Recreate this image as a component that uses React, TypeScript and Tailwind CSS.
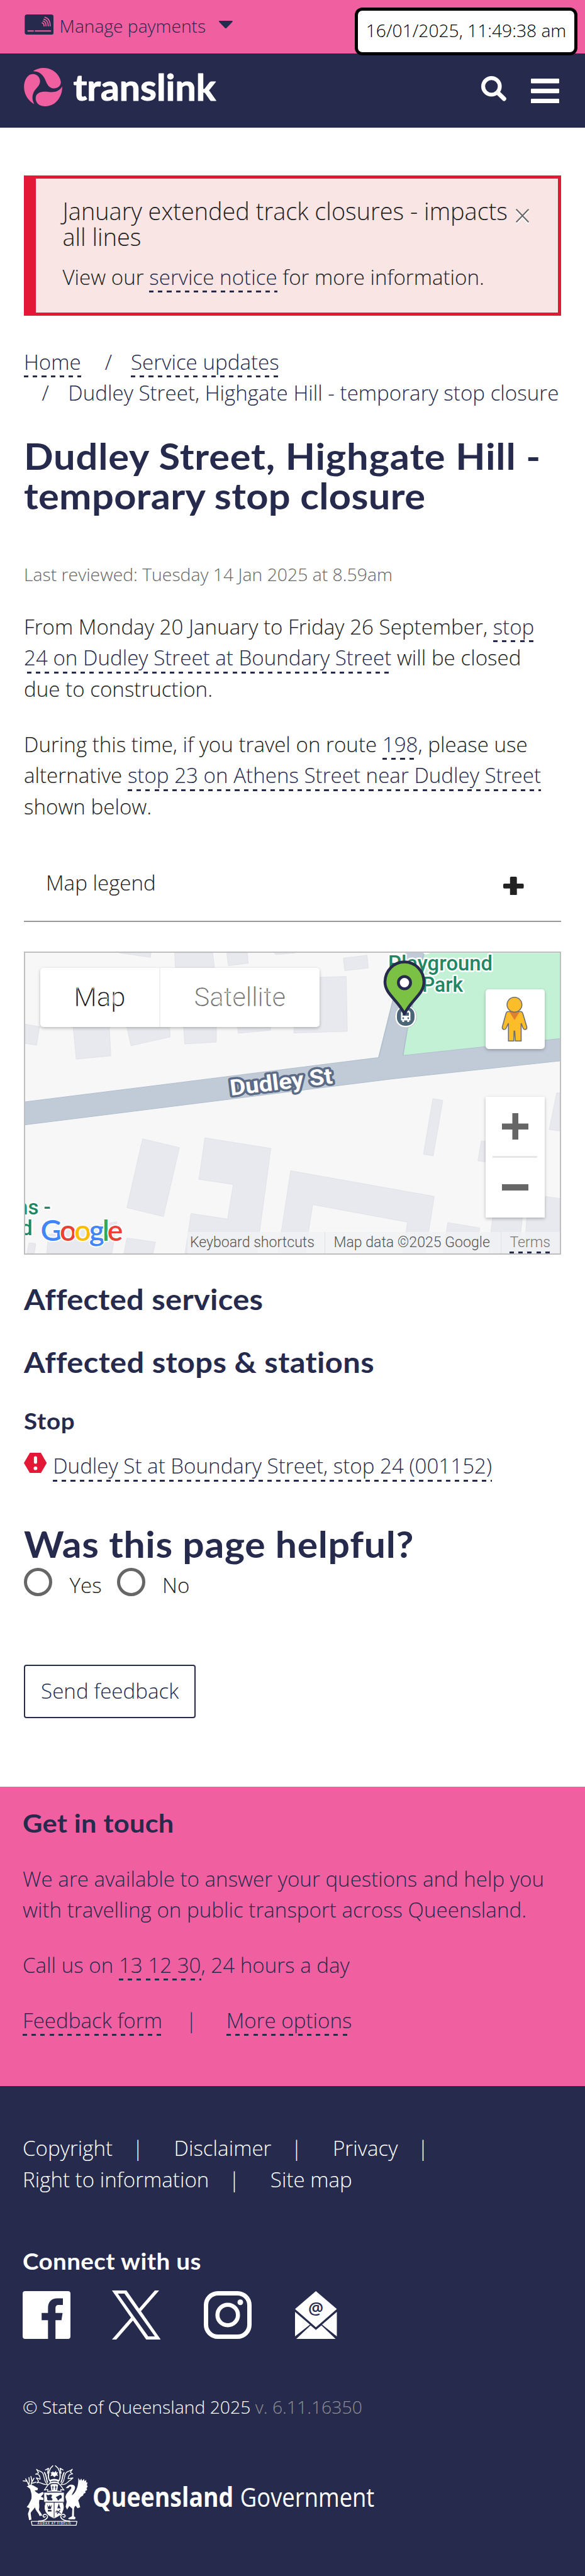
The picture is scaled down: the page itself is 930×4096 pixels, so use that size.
import React from "react";

const LINK =
  "cursor-pointer pb-[2.5px] text-[#262b4d] bg-[repeating-linear-gradient(90deg,#262b4d_0_7.1px,transparent_7.1px_14.2px)] bg-[length:100%_3px] bg-[position:0_100%] bg-no-repeat";

const FOOTER_LINKS = ["Copyright", "Disclaimer", "Privacy", "Right to information", "Site map"];

const BUILDINGS = [
  "468,72 570,72 575,145 470,145",
  "320,72 405,72 403,93",
  "608,72 663,72 665,122 612,134",
  "735,72 790,72 740,80",
  "920,97 984,83 987,145 924,158",
  "858,190 928,186 931,453 787,461 789,430 858,430",
  "196,430 293,430 297,572 204,588",
  "340,434 455,434 456,480 351,523",
  "492,430 580,430 580,505 495,514",
  "637,430 725,430 725,448 638,462",
  "68,418 106,430 98,520 68,512",
  "382,975 481,1018 438,1353 340,1310",
  "549,970 726,1022 688,1532 496,1532 512,1338 610,1365 625,1197 533,1172",
  "779,1130 1164,1255 1140,1532 1080,1532 1092,1380 838,1295 818,1532 745,1532",
  "1160,780 1187,788 1161,1058 1135,1050",
  "1492,752 1500,752 1500,937 1472,930",
  "1290,985 1310,990 1310,1090 1281,1082",
  "1200,1382 1286,1408 1275,1532 1188,1532",
  "1320,1358 1400,1358 1390,1532 1310,1532",
  "1462,1255 1500,1265 1500,1532 1405,1532 1412,1358 1455,1358",
  "340,1457 417,1477 410,1532 332,1532",
  "130,1440 313,1378 300,1532 125,1532",
  "78,1480 96,1484 92,1532 72,1532",
];

function Bold({ children, className }: { children: React.ReactNode; className: string }) {
  return <span className={`block w-max origin-left whitespace-nowrap font-['Lato',sans-serif] font-bold ${className}`}>{children}</span>;
}

function TopBar() {
  return (
    <div className="relative flex h-[85.2px] items-start bg-[#f060a1] pl-[38.9px]">
      <svg className="mt-[22.9px] h-[32.4px] w-[46.4px]" viewBox="58 57 176 123">
        <rect x="59" y="57" width="175" height="122" rx="15" fill="#262b4d" />
        <g stroke="#f060a1" strokeWidth="6.5" fill="none" strokeLinecap="round">
          <path d="M79 156.5H111M123 156.5H215" strokeWidth="8" />
          <path d="M164 108C172 110 176 117 176 126M170 97C182 100 188 112 188 126M175 86C192 89 201 106 201 126M181 74C203 79 214 101 213 126" />
        </g>
      </svg>
      <span className="ml-[9.3px] mt-[19.5px] text-[28.2px] leading-[42.6px]">Manage payments</span>
      <svg className="ml-[21px] mt-[32.9px] h-[12.4px] w-[21.8px]" viewBox="0 0 22 12.4">
        <path d="M1.2 0H20.8C22 0 22.3 1 21.5 1.9L12 11.8Q11 12.8 10 11.8L.5 1.9C-.3 1 0 0 1.2 0Z" fill="#262b4d" />
      </svg>
      <div className="absolute left-[564px] top-[11.8px] z-10 flex h-[75.8px] w-[354px] justify-center rounded-[12px] border-[5px] border-black bg-white pt-[10.2px] text-[28.2px] leading-[42.6px] text-black">
        16/01/2025, 11:49:38 am
      </div>
    </div>
  );
}

function Header() {
  return (
    <header className="flex h-[118.2px] items-start bg-[#262b4d] pl-[38px]">
      <svg className="mt-[22.6px] h-[62px] w-[308px]" viewBox="54 380 1171 236">
        <g fill="#f060a1">
          <path d="M108 400C140 378 185 372 225 393C258 412 277 445 277 468C277 490 255 506 232 504C210 502 198 488 188 465C176 432 155 398 108 400Z" />
          <path d="M116 599C80 580 54 540 54 495C54 450 78 416 108 417C135 418 152 438 151 463C149 488 130 500 115 522C103 545 100 570 116 599Z" />
          <path d="M285 492C287 530 270 572 235 597C205 615 170 617 148 605C125 590 120 565 128 547C138 528 160 523 190 524C235 530 265 525 285 492Z" />
        </g>
        <text x="352" y="578" textLength="863" lengthAdjust="spacingAndGlyphs" fontFamily="Lato, sans-serif" fontWeight="700" fontSize="216" fill="#fff" stroke="#fff" strokeWidth="4" strokeLinejoin="round">
          translink
        </text>
      </svg>
      <svg className="ml-[419px] mt-[36.3px] h-[39.6px] w-[40px]" viewBox="0 0 40 39.6" fill="none" stroke="#fff" strokeLinecap="round">
        <circle cx="16.3" cy="16.3" r="13.2" strokeWidth="6.2" />
        <path d="M26.5 26.5L36.3 36" strokeWidth="7" />
      </svg>
      <svg className="ml-[39px] mt-[39.7px] h-[39.5px] w-[45px]" viewBox="0 0 45 39.5" fill="#fff">
        <rect width="45" height="7.4" rx="1.2" />
        <rect y="15.9" width="45" height="7.4" rx="1.2" />
        <rect y="32" width="45" height="7.4" rx="1.2" />
      </svg>
    </header>
  );
}

function Pegman() {
  return (
    <svg className="h-[94.4px] w-[94.4px]" viewBox="0 0 94.4 94.4">
      <path
        d="M35 35.5H56.5Q58.5 36 59.3 39L65.5 60Q66 63.5 63 64Q60.5 64 59.5 61.5L56.5 54V82.3H47.3L46.3 66.5H45.3L44.8 82.3H36.3V54L32.5 62Q31.5 64.2 29 64Q26 63.2 26.5 60L32.5 38.5Q33.2 36 35 35.5Z"
        fill="#fbbd2a"
        stroke="#6f6f6f"
        strokeWidth="1.6"
      />
      <path d="M38 36H54L46 49Z" fill="#e27f2d" />
      <circle cx="45.9" cy="24.6" r="11.8" fill="#fbbd2a" stroke="#6f6f6f" strokeWidth="1.6" />
    </svg>
  );
}

function MapPanel() {
  return (
    <div className="relative mt-[46.3px] h-[482.4px] w-[854px] overflow-hidden bg-[#f7f7f7] font-['Roboto',sans-serif]">
      <svg className="block h-[482.4px] w-[854px]" viewBox="0 0 854 482.4">
        <g transform="scale(0.5931 0.3272) translate(-64 -65)">
          <g fill="#e8e9ee" stroke="#dcdee4" strokeWidth="1.5">
            {BUILDINGS.map((p) => (
              <polygon key={p} points={p} />
            ))}
          </g>
          <path d="M1138 72H1504V490L1080 572L1092 440Z" fill="#c3f1d6" />
          <path d="M60 797L1015 580L1052 310L1088 60H1138L1092 440L1080 570L1510 486V595L1055 683L60 909Z" fill="#c1cbd8" stroke="#b1bfcc" strokeWidth="3" />
        </g>
        <g fontFamily="Roboto, sans-serif" fontWeight="500" fill="#1f8763" stroke="#fff" strokeWidth="5" strokeLinejoin="round" paintOrder="stroke">
          <text x="636" y="-4" fontSize="32">y</text>
          <text x="579" y="30" fontSize="33" textLength="166" lengthAdjust="spacingAndGlyphs">Playground</text>
          <text x="633" y="64.5" fontSize="33" textLength="65" lengthAdjust="spacingAndGlyphs">Park</text>
          <text x="-12" y="418.5" fontSize="33">ns -</text>
          <text x="-5" y="451" fontSize="33">d</text>
        </g>
        <text transform="rotate(-6.9 330 230)" x="329" y="229" textLength="164" lengthAdjust="spacingAndGlyphs" fontFamily="Roboto, sans-serif" fontWeight="700" fontSize="35" fill="#fff" stroke="#5c6c87" strokeWidth="7" strokeLinejoin="round" paintOrder="stroke">
          Dudley St
        </text>
        <rect x="590" y="86" width="34" height="35" rx="16" fill="#fff" stroke="#b8c0c8" strokeWidth="1" />
        <rect x="593" y="88" width="28" height="30" rx="13" fill="#4a6478" />
        <path d="M599.5 98Q599.5 93 607 93T614.5 98V109.5H612.5V112H609.5V109.5H604.5V112H601.5V109.5H599.5Z" fill="#fff" />
        <path d="M602 97H612V102H602Z" fill="#4a6478" />
        <circle cx="603" cy="106" r="1.4" fill="#4a6478" />
        <circle cx="611" cy="106" r="1.4" fill="#4a6478" />
        <path d="M605 16.5C588 16.5 574.5 30.5 574 48C574 68 594 76 605 99C616 76 636 68 636 48C635.5 30.5 622 16.5 605 16.5Z" fill="#7bc143" stroke="#262b4d" strokeWidth="4.5" strokeLinejoin="round" />
        <circle cx="605" cy="49.5" r="9.7" fill="#fff" stroke="#262b4d" strokeWidth="4.5" />
        <text x="26.5" y="460" textLength="131" fontFamily="Lato, sans-serif" fontWeight="600" fontSize="46.5" stroke="#fff" strokeWidth="4" paintOrder="stroke" strokeLinejoin="round">
          <tspan fill="#4285f4">G</tspan>
          <tspan fill="#ea4335">o</tspan>
          <tspan fill="#fbbc05">o</tspan>
          <tspan fill="#4285f4">g</tspan>
          <tspan fill="#34a853">l</tspan>
          <tspan fill="#ea4335">e</tspan>
        </text>
      </svg>
      <div className="absolute left-[26px] top-[26px] flex h-[94.5px] rounded-[5px] bg-white text-[41.8px] font-light leading-[93px] shadow-[0_2px_5px_rgba(0,0,0,0.25)] [-webkit-text-stroke:0.5px_white]">
        <span className="w-[191px] border-r-2 border-[#f1f1f1] text-center text-black">Map</span>
        <span className="w-[252.6px] text-center text-[#666]">Satellite</span>
      </div>
      <div className="absolute left-[733.6px] top-[60.9px] rounded-[5px] bg-white shadow-[0_2px_5px_rgba(0,0,0,0.25)]">
        <Pegman />
      </div>
      <div className="absolute left-[733.6px] top-[231.4px] flex h-[191.7px] w-[94.4px] flex-col items-center bg-white shadow-[0_2px_5px_rgba(0,0,0,0.25)]">
        <svg className="mt-[26px] h-[42.5px] w-[42.5px]" viewBox="0 0 42.5 42.5" fill="#666">
          <path d="M0 16.5H16.5V0H26V16.5H42.5V26H26V42.5H16.5V26H0Z" />
        </svg>
        <div className="mt-[26px] h-[2.5px] w-[70.6px] bg-[#e6e6e6]" />
        <div className="mt-[42.5px] h-[9.5px] w-[42.5px] bg-[#666]" />
      </div>
      <div className="absolute bottom-[2px] right-[2px] flex h-[33.5px] items-start bg-[#f0f1f4]/80 text-[23.1px] font-light leading-[33.5px] text-[#555]">
        <span className="w-[219px] whitespace-nowrap border-r border-[#e0e2e6] pl-[4px]">Keyboard shortcuts</span>
        <span className="w-[280px] whitespace-nowrap border-r border-[#e0e2e6] pl-[13.5px]">Map data ©2025 Google</span>
        <span className="ml-[13.5px] mr-[15px] h-[33.5px] bg-[repeating-linear-gradient(90deg,#262b4d_0_7.1px,transparent_7.1px_14.2px)] bg-[length:100%_3px] bg-[position:0_100%] bg-no-repeat text-[#777]">Terms</span>
      </div>
      <div className="pointer-events-none absolute inset-0 border-2 border-[#bfbfbf]" />
    </div>
  );
}

function CrestLogo() {
  return (
    <svg className="mt-[71.9px] block h-[96.5px] w-[560.5px]" viewBox="54 80 2131 367" fill="#fff">
      <g fill="none" stroke="#fff" strokeWidth="5" strokeLinecap="round" strokeLinejoin="round">
        <path d="M236 83L222 98L212 122M252 83L268 98L278 122M192 108L210 98L204 128M298 108L280 98L286 128" strokeWidth="6" />
        <path d="M212 122C206 150 208 165 222 178M278 122C284 150 282 165 268 178" strokeWidth="7" />
        <path d="M205 195C180 180 188 150 176 128C165 112 150 118 138 104L150 126L132 134C152 132 158 142 160 164L136 156L150 176L140 186C160 176 172 200 200 196" />
        <path d="M285 195C310 180 302 150 314 128C325 112 340 118 354 104L342 122L356 132C336 132 330 142 328 160L358 156L342 170C326 178 318 200 290 196" />
        <path d="M186 124C200 145 196 165 204 182M304 124C292 145 296 165 286 182" strokeWidth="7" />
        <path d="M218 190C200 200 196 220 184 230L206 226L204 238L226 236M270 190C288 200 292 220 304 230L284 226L286 238L264 236" />
        <path d="M92 200L80 176L57 174M80 176L72 162M92 196L94 176L92 154M104 200L110 176L104 148M110 180L122 158M112 188L134 182" strokeWidth="6" />
        <path d="M106 419H382L377 443H111Z" />
        <path d="M150 417C170 418 200 410 204 392C206 376 186 372 178 382C174 392 186 398 190 390M338 417C318 418 288 410 284 392C282 376 302 372 310 382C314 392 302 398 298 390" strokeWidth="6" />
      </g>
      <path d="M234 116L245 124L256 112L257 124L268 122L262 132L268 144L256 142L245 152L236 142L222 146L228 132L222 120L233 124Z" />
      <path d="M218 168Q245 156 272 168L270 178Q245 168 220 178ZM216 184Q245 172 274 184V192Q245 182 216 192Z" />
      <path d="M222 197Q245 190 268 197L262 239H228Z" />
      <path d="M236 204V228M230 212H242M254 204V228M248 212H260" stroke="#262b4d" strokeWidth="4" fill="none" />
      <path d="M78 206C90 206 94 196 106 198C122 202 130 210 146 218L144 230L126 232C132 240 138 244 150 252L174 242L184 246C178 256 170 262 164 270L178 276L182 290L156 288C150 300 156 320 154 336L152 350C158 362 168 370 172 384L156 386C152 372 138 358 132 346L128 334C122 346 108 356 102 368L107 408L93 412L86 376C86 366 96 352 94 340L78 332C92 318 98 300 106 284C112 262 104 240 98 222Z" />
      <path d="M390 156L400 172L408 160L414 174L424 162L428 176L438 168L438 184L446 184L442 200L447 208L440 218L444 228L432 236L434 246L422 252L420 262L404 272L390 292L402 334L386 340L374 324C366 330 364 340 364 350V388L374 396L370 406L334 406L328 400L352 388L354 342L336 326L322 348L314 330L320 300L312 272C316 248 336 236 348 218C350 206 338 204 330 218L314 218C324 206 334 196 350 197C370 198 376 214 366 230C358 246 352 252 352 262C380 240 392 200 390 156Z" />
      <path d="M182 243H305V300L300 310C312 340 300 384 244 403C188 384 176 340 190 310L182 300Z" stroke="#262b4d" strokeWidth="4" />
      <path d="M188 303H300M244 303V398" stroke="#262b4d" strokeWidth="4" />
      <path d="M196 256Q206 262 212 260Q222 254 232 260L226 276Q238 284 232 292H206Q198 288 202 280ZM254 272Q266 268 274 262Q286 254 290 266Q292 280 280 282L268 294L262 282ZM202 318L208 344H224L232 316L222 332L217 318L212 332ZM206 350H228V360H206ZM262 346L272 310L284 346Z" fill="#262b4d" />
      <circle cx="272" cy="362" r="22" fill="#fff" />
      <path d="M258 354L284 372M262 374L280 350M252 362H266" stroke="#262b4d" strokeWidth="5" />
      <text x="244" y="438" textAnchor="middle" fontFamily="Open Sans, sans-serif" fontSize="17" fontWeight="600" textLength="200" lengthAdjust="spacing">AUDAX AT FIDELIS</text>
      <text x="476" y="331" textLength="853" lengthAdjust="spacingAndGlyphs" fontFamily="Open Sans, sans-serif" fontWeight="700" fontSize="160">Queensland</text>
      <text x="1369" y="331" textLength="812" lengthAdjust="spacingAndGlyphs" fontFamily="Open Sans, sans-serif" fontWeight="400" fontSize="160">Government</text>
    </svg>
  );
}

function SocialIcons() {
  return (
    <div className="mt-[22px] flex h-[78px] items-start">
      <svg className="mt-[0.8px] h-[76px] w-[76px]" viewBox="0 0 76 76">
        <rect width="76" height="76" rx="4" fill="#fff" />
        <path d="M40.3 76V46.3H30.2V34.7H40.3V27C40.3 17 46 11.6 55 11.6H64V22.1H57.5C53.5 22.1 52.2 24 52.2 27.5V34.7H63.5L61.7 46.3H52.2V76Z" fill="#262b4d" />
      </svg>
      <svg className="ml-[65.5px] h-[78px] w-[77.5px]" viewBox="0 0 1200 1227" preserveAspectRatio="none" fill="#fff">
        <path d="M714.163 519.284L1160.89 0H1055.03L667.137 450.887L357.328 0H0L468.492 681.821L0 1226.37H105.866L515.491 750.218L842.672 1226.37H1200L714.137 519.284H714.163ZM569.165 687.828L521.697 619.934L144.011 79.694H306.615L611.412 515.685L658.88 583.579L1055.08 1150.3H892.476L569.165 687.854V687.828Z" />
      </svg>
      <svg className="ml-[68.5px] mt-[0.8px] h-[76px] w-[76px]" viewBox="0 0 76 76" fill="none" stroke="#fff">
        <rect x="3.5" y="3.5" width="69" height="69" rx="19" strokeWidth="7" />
        <circle cx="38" cy="38" r="16.3" strokeWidth="6.5" />
        <circle cx="58" cy="17.8" r="4.5" fill="#fff" stroke="none" />
      </svg>
      <svg className="ml-[69.5px] mt-[0.8px] h-[76px] w-[66.5px]" viewBox="0 0 66.5 76" fill="#fff">
        <path d="M33.2 0L66.5 28.5L33.2 57.5L0 28.5ZM0 33L23.7 53.2L0 72ZM66.5 33L43 53.2L66.5 72ZM2 76L24.7 54.5L33.2 61.8L42 54.5L64.5 76Z" />
        <text x="33.2" y="36.5" textAnchor="middle" fontFamily="Open Sans, sans-serif" fontWeight="600" fontSize="27" fill="#262b4d">@</text>
      </svg>
    </div>
  );
}

export default function App() {
  return (
    <div className="h-[4096px] w-[930px] overflow-hidden bg-white font-['Open_Sans',sans-serif] text-[33.13px] font-light leading-[49.7px] text-[#262b4d]">
      <TopBar />
      <Header />
      <main className="h-[2637.7px] px-[38px] pt-[76px] text-[#222]">
        <section className="flex h-[222.3px] items-start border-[5px] border-l-[19px] border-[#e31836] bg-[#f9e5e3] pl-[42.5px] pt-[32px]">
          <div className="w-[716px]">
            <p className="whitespace-nowrap text-[37.86px] leading-[40.3px]">
              January extended track closures - impacts
              <br />
              all lines
            </p>
            <p className="mt-[18.6px]">
              View our <a className={LINK}>service notice</a> for more information.
            </p>
          </div>
          <svg className="ml-[4.5px] mt-[15.7px] h-[25px] w-[21px]" viewBox="0 0 21 25" fill="none" strokeWidth="2">
            <path d="M.7 3.5L20.3 24M20.3 3.5L.7 24" stroke="#fff" />
            <path d="M.7 .7L20.3 21.2M20.3 .7L.7 21.2" stroke="#666" />
          </svg>
        </section>

        <nav className="mt-[49px] text-[#262b4d]">
          <div className="flex">
            <span>
              <a className={LINK}>Home</a>
            </span>
            <span className="ml-[38px] mr-[30px]">/</span>
            <span>
              <a className={LINK}>Service updates</a>
            </span>
          </div>
          <div className="flex pl-[28.5px]">
            <span className="mr-[30.5px]">/</span>
            <span className="whitespace-nowrap">Dudley Street, Highgate Hill - temporary stop closure</span>
          </div>
        </nav>

        <h1 className="mt-[42.7px] text-[58px] leading-[63.7px] text-[#262b4d]">
          <Bold className="scale-x-[1.06] tracking-[0.75px]">Dudley Street, Highgate Hill -</Bold>
          <Bold className="scale-x-[1.06] tracking-[0.3px]">temporary stop closure</Bold>
        </h1>
        <p className="mt-[71.5px] text-[28.35px] leading-[42.6px] text-[#666]">Last reviewed: Tuesday 14 Jan 2025 at 8.59am</p>

        <p className="mt-[37.5px] whitespace-nowrap">
          From Monday 20 January to Friday 26 September,{" "}
          <a className={LINK}>
            stop
            <br />
            24 on Dudley Street at Boundary Street
          </a>{" "}
          will be closed
          <br />
          due to construction.
        </p>
        <p className="mt-[37.7px] whitespace-nowrap">
          During this time, if you travel on route <a className={LINK}>198</a>, please use
          <br />
          alternative <a className={LINK}>stop 23 on Athens Street near Dudley Street</a>
          <br />
          shown below.
        </p>

        <div className="mt-[71.3px] flex h-[87.3px] items-start justify-between border-b-2 border-[#999] pl-[35px] pr-[59.5px]">
          <span>Map legend</span>
          <svg className="mt-[14.8px] h-[29.7px] w-[32.6px]" viewBox="0 0 32.6 29.7" fill="#222">
            <rect x="10.8" width="10.9" height="29.7" rx="1.8" />
            <rect y="11" width="32.6" height="7.8" rx="1.8" />
          </svg>
        </div>

        <MapPanel />

        <h2 className="mt-[40.5px] text-[46.5px] leading-[60px] text-[#262b4d]">
          <Bold className="scale-x-[1.05] tracking-[0.3px]">Affected services</Bold>
        </h2>
        <h2 className="mt-[39.5px] text-[46.5px] leading-[60px] text-[#262b4d]">
          <Bold className="scale-x-[1.05] tracking-[0.35px]">Affected stops &amp; stations</Bold>
        </h2>
        <h3 className="mt-[39px] text-[36px] leading-[50px] text-[#262b4d]">
          <Bold className="scale-x-[1.07] tracking-[0.7px]">Stop</Bold>
        </h3>
        <div className="mt-[22.3px] flex h-[49.7px] items-start">
          <svg className="mt-[3.7px] h-[32.3px] w-[36.3px]" viewBox="0 0 36.3 32.3">
            <path d="M9.5 0H27L36.3 16.2L27 32.3H9.5L0 16.2Z" fill="#e31836" />
            <rect x="15.9" y="5.5" width="5" height="12" rx="2.5" fill="#fff" />
            <circle cx="18.4" cy="24.7" r="2.9" fill="#fff" />
          </svg>
          <span className="ml-[9.9px]">
            <a className={LINK}>Dudley St at Boundary Street, stop 24 (001152)</a>
          </span>
        </div>

        <h2 className="mt-[63.8px] text-[57.3px] leading-[70px] text-[#262b4d]">
          <Bold className="scale-x-[1.06] tracking-[0.65px]">Was this page helpful?</Bold>
        </h2>
        <div className="mt-[3.2px] flex h-[52.2px] items-start">
          <span className="h-[45px] w-[45px] rounded-full border-[5px] border-[#666]" />
          <span className="ml-[27.5px] mt-[3.2px] w-[75px]">Yes</span>
          <span className="h-[45px] w-[45px] rounded-full border-[5px] border-[#666]" />
          <span className="ml-[27.5px] mt-[3.2px]">No</span>
        </div>
        <button className="mt-[101.6px] block h-[85.2px] w-[273.4px] rounded-[4px] border-2 border-[#262b4d] pb-[1px] text-center text-[#262b4d]">
          Send feedback
        </button>
      </main>

      <section className="h-[475.8px] bg-[#f060a1] px-[36px] pt-[28.4px]">
        <h3 className="text-[41px] leading-[60px]">
          <Bold className="scale-x-[1.06] tracking-[0.2px]">Get in touch</Bold>
        </h3>
        <p className="mt-[33.2px] whitespace-nowrap">
          We are available to answer your questions and help you
          <br />
          with travelling on public transport across Queensland.
        </p>
        <p className="mt-[37.9px]">
          Call us on <a className={LINK}>13 12 30</a>, 24 hours a day
        </p>
        <p className="mt-[38.2px]">
          <a className={LINK}>Feedback form</a>
          <span className="ml-[37.4px] mr-[46.4px]">|</span>
          <a className={LINK}>More options</a>
        </p>
      </section>

      <footer className="h-[779.1px] bg-[#262b4d] px-[36px] pt-[74.3px] text-white">
        <ul className="flex flex-wrap pr-[150px]">
          {FOOTER_LINKS.map((label, i) => (
            <li key={label} className="whitespace-nowrap">
              {label}
              {i < FOOTER_LINKS.length - 1 && <span className="ml-[31px] mr-[48.5px]">|</span>}
            </li>
          ))}
        </ul>
        <h3 className="mt-[79.3px] text-[36px] leading-[50px]">
          <Bold className="scale-x-[1.07] tracking-[0.4px]">Connect with us</Bold>
        </h3>
        <SocialIcons />
        <p className="mt-[85.9px] text-[28.35px] leading-[42.6px]">
          © State of Queensland 2025 <span className="text-[#8f8f93]">v. 6.11.16350</span>
        </p>
        <CrestLogo />
      </footer>
    </div>
  );
}
